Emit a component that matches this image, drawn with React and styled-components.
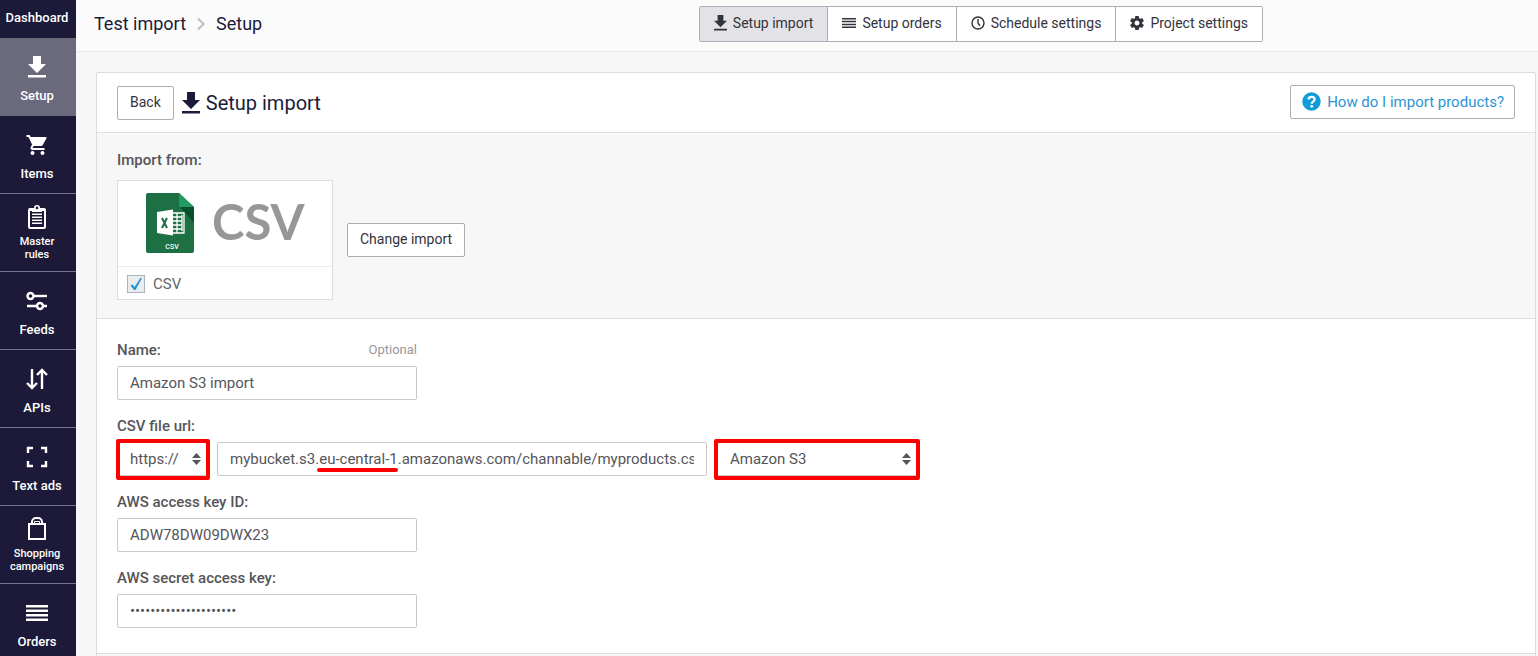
import React, { useId } from 'react';
import styled, { createGlobalStyle, css } from 'styled-components';

const GlobalStyle = createGlobalStyle`
  *, *::before, *::after { box-sizing: border-box; }
  body {
    margin: 0;
    background: #f7f7f7;
    color: #1c1b3a;
    font-family: Roboto, "Liberation Sans", sans-serif;
    font-size: 15px;
    line-height: 20px;
  }
  button, input, select { font: inherit; color: inherit; margin: 0; }
`;

const NAVY = '#1c1a38';

const Shell = styled.div`
  display: flex;
  height: 100vh;
  overflow: hidden;
`;

const Sidebar = styled.nav`
  flex: none;
  display: flex;
  flex-direction: column;
  width: 76px;
  overflow: hidden;
  background: ${NAVY};
`;

const NavIcon = styled.span`
  display: flex;
  align-items: center;
  height: 24px;
  margin-bottom: 8px;
`;

const NavLink = styled.a`
  flex: none;
  display: flex;
  flex-direction: column;
  align-items: center;
  justify-content: flex-end;
  height: ${(p) => (p.$short ? 38 : 78)}px;
  padding: 0 2px 10px 0;
  border-bottom: 1px solid ${(p) => (p.$active || p.$short ? 'transparent' : '#74738a')};
  background: ${(p) => (p.$active ? '#6b6a7c' : NAVY)};
  color: #fff;
  font-size: 13px;
  font-weight: 500;
  line-height: 18px;
  text-align: center;
  text-decoration: none;

  ${(p) => p.$twoLine && css`
    padding: 0 10px 10px 8px;
    font-size: 11px;
    line-height: 13px;
    ${NavIcon} { margin-bottom: 6px; }
  `}
`;

const Main = styled.div`
  flex: 1;
  min-width: 0;
  display: flex;
  flex-direction: column;
`;

const TopBar = styled.header`
  flex: none;
  display: flex;
  align-items: center;
  justify-content: space-between;
  height: 52px;
  padding: 0 275px 4px 18px;
  background: #fbfbfb;
  border-bottom: 1px solid #ebebeb;
`;

const Breadcrumb = styled.div`
  display: flex;
  align-items: center;
  gap: 10px;
  font-size: 18px;
  line-height: 24px;
  white-space: nowrap;

  a { color: inherit; text-decoration: none; }
`;

const Tabs = styled.div`
  display: flex;
  border: 1px solid #acabb6;
  border-radius: 2px;
  background: #fff;
`;

const Tab = styled.button`
  display: flex;
  align-items: center;
  gap: 6px;
  height: 34px;
  padding: 0 14px 2px;
  border: 0;
  background: ${(p) => (p.$active ? '#e3e2e7' : '#fff')};
  color: #33333b;
  font-size: 14px;
  white-space: nowrap;

  & + & { border-left: 1px solid #acabb6; }
`;

const Content = styled.main`
  flex: 1;
  min-height: 0;
  overflow: hidden;
  padding: 20px 2px 0 20px;
`;

const Card = styled.section`
  border: 1px solid #dcdcdc;
  border-radius: 2px;
  background: #fff;
`;

const CardHeader = styled.div`
  display: flex;
  align-items: center;
  justify-content: space-between;
  height: 60px;
  padding: 0 20px;
  border-bottom: 1px solid #dfdfdf;
`;

const CardFooter = styled.div`
  height: 60px;
  background: #f7f7f7;
`;

const TitleGroup = styled.div`
  display: flex;
  align-items: center;
  gap: 8px;
`;

const Title = styled.h1`
  display: flex;
  align-items: center;
  gap: 6px;
  margin: 0;
  font-size: 20px;
  font-weight: 400;
  line-height: 24px;
`;

const Button = styled.button`
  height: 34px;
  padding: 0 12px 2px;
  border: 1px solid #acabb6;
  border-radius: 2px;
  background: #fff;
  color: #33333b;
  font-size: 14px;
`;

const HelpLink = styled.a`
  display: flex;
  align-items: center;
  gap: 6px;
  height: 34px;
  padding: 0 10px 0 11px;
  border: 1px solid #acabb6;
  border-radius: 2px;
  color: #2d94d3;
  text-decoration: none;
`;

const HeaderAction = styled.div`
  padding-bottom: 2px;
`;

const ImportSection = styled.div`
  padding: 17px 20px 18px;
  background: #f7f7f7;
  border-bottom: 1px solid #dfdfdf;
`;

const SectionTitle = styled.div`
  margin-bottom: 10px;
  color: #55555a;
  font-weight: 500;
`;

const ImportRow = styled.div`
  display: flex;
  align-items: center;
  gap: 14px;
`;

const SourceCard = styled.label`
  width: 216px;
  border: 1px solid #dcdcdc;
  background: #fff;
`;

const SourceLogo = styled.span`
  display: flex;
  align-items: flex-start;
  gap: 18px;
  height: 86px;
  padding: 12px 0 0 28px;
  border-bottom: 1px solid #ebebeb;
`;

const Wordmark = styled.span`
  color: #979797;
  font-family: Lato, sans-serif;
  font-size: 49px;
  font-weight: 700;
  line-height: 56px;
`;

const SourceOption = styled.span`
  display: flex;
  align-items: center;
  gap: 8px;
  height: 32px;
  padding: 2px 9px 0;
  color: #66666b;
`;

const Checkbox = styled.input`
  appearance: none;
  width: 18px;
  height: 18px;
  border: 1px solid #a9b5bd;
  background: #ebeced;
`;

const CheckHolder = styled.span`
  position: relative;
  display: flex;

  svg { position: absolute; inset: 0; pointer-events: none; }
`;

const Form = styled.form`
  display: flex;
  flex-direction: column;
  gap: 16px;
  padding: 21px 20px 25px;
  border-bottom: 1px solid #dcdcdc;
  color: #55555a;
`;

const Field = styled.div`
  width: ${(p) => (p.$wide ? 'auto' : '300px')};
`;

const LabelRow = styled.div`
  display: flex;
  justify-content: space-between;
  margin-bottom: 6px;
  font-weight: 500;
`;

const Hint = styled.span`
  color: #97979b;
  font-size: 13px;
  font-weight: 400;
`;

const Input = styled.input`
  display: block;
  width: 100%;
  height: 34px;
  padding: 0 12px;
  border: 1px solid #c9c9cb;
  border-radius: 2px;
  background: #fff;
  outline: 0;
`;

const UrlRow = styled.div`
  display: flex;
  gap: 10px;
`;

const UrlBox = styled.div`
  position: relative;
  width: 490px;

  &::after {
    content: "";
    position: absolute;
    left: 100px;
    bottom: 4px;
    width: 81px;
    height: 4px;
    border-radius: 2px;
    background: #fd0000;
  }
`;

const SelectBox = styled.div`
  position: relative;
  width: ${(p) => p.$width}px;

  &::after {
    content: "";
    position: absolute;
    inset: -3px -3px -4px ${(p) => (p.$first ? -1 : -3)}px;
    border: 4px solid #fd0000;
    border-radius: 2px;
    pointer-events: none;
  }

  svg { position: absolute; right: 6px; top: 11px; pointer-events: none; }
`;

const Select = styled.select`
  appearance: none;
  display: block;
  width: 100%;
  height: 34px;
  padding: 0 12px;
  border: 1px solid #c9c9cb;
  border-radius: 2px;
  background: #fff;
  outline: 0;
`;

const Svg = ({ w = 24, h = w, box = `0 0 ${w} ${h}`, children }) => (
  <svg width={w} height={h} viewBox={box} fill="currentColor" aria-hidden="true">{children}</svg>
);

const DownloadIcon = ({ w = 18, h = 22 }) => (
  <Svg w={w} h={h} box="0 0 18 22"><path d="M5 0h8v8h5l-9 9-9-9h5zM0 19h18v2.5H0z" /></Svg>
);
const CartIcon = () => (
  <Svg w={22} box="1 1 21 22">
    <path d="M7 18c-1.1 0-1.99.9-1.99 2S5.900 22 7 22s2-.9 2-2-.9-2-2-2zM1 2v2h2l3.600 7.590-1.350 2.450c-.16.280-.25.610-.25.960 0 1.100.9 2 2 2h12v-2H7.420c-.14 0-.25-.11-.25-.25l.03-.12.9-1.630h7.450c.75 0 1.410-.41 1.750-1.030l3.580-6.490A1 1 0 0 0 20 4H5.210l-.94-2H1zm16 16c-1.100 0-1.990.9-1.990 2s.89 2 1.990 2 2-.9 2-2-.9-2-2-2z" />
  </Svg>
);
const ClipboardIcon = () => (
  <Svg w={18} h={24}>
    <path fillRule="evenodd" d="M2 3h4a3 3 0 0 1 6 0h4a2 2 0 0 1 2 2v17a2 2 0 0 1-2 2H2a2 2 0 0 1-2-2V5a2 2 0 0 1 2-2zm0 3v16h14V6zM9 1.600a1.300 1.300 0 1 0 0 2.600 1.300 1.300 0 0 0 0-2.600z" />
    <path d="M4 5h10v2H4zM4 8.500h10V10H4zM4 11.500h10V13H4zM4 14.500h10V16H4zM4 17.500h10V19H4z" />
  </Svg>
);
const SlidersIcon = () => (
  <Svg w={22} h={20}>
    <g fill="none" stroke="currentColor" strokeWidth="2.400">
      <circle cx="4.500" cy="5" r="3" /><path d="M7.500 5H21" />
      <circle cx="14" cy="15" r="3" /><path d="M1 15h10M17 15h4" />
    </g>
  </Svg>
);
const ArrowsIcon = () => (
  <Svg w={22} h={22}>
    <path fill="none" stroke="currentColor" strokeWidth="2.400" d="M6 1v18M1 15l5 5 5-5M16 21V3M11 7l5-5 5 5" />
  </Svg>
);
const FrameIcon = () => (
  <Svg w={22} h={22}>
    <path fill="none" stroke="currentColor" strokeWidth="2.400" d="M2 7V2h5M15 2h5v5M20 15v5h-5M7 20H2v-5" />
  </Svg>
);
const BagIcon = () => (
  <Svg w={20} h={24}>
    <path fill="none" stroke="currentColor" strokeWidth="2" d="M2 7h16v15H2zM5 7V5a4 4 0 0 1 4-4h2a4 4 0 0 1 4 4v2" />
    <path fill="none" stroke="currentColor" d="M7.500 6V4.500h5V6" />
  </Svg>
);
const LinesIcon = ({ w = 22, h = 16 }) => (
  <Svg w={w} h={h} box="0 0 22 16"><path d="M0 0h22v2.500H0zM0 4.500h22V7H0zM0 9h22v2.500H0zM0 13.500h22V16H0z" /></Svg>
);
const ClockIcon = () => (
  <Svg w={14}><g fill="none" stroke="currentColor" strokeWidth="1.400"><circle cx="7" cy="7" r="6" /><path d="M7 3v4.200l2 2.500" /></g></Svg>
);
const GearIcon = () => (
  <Svg w={14} box="2 2 20 20">
    <path d="M19.430 12.980c.04-.32.070-.64.070-.98s-.03-.66-.07-.98l2.110-1.650c.19-.15.24-.42.120-.64l-2-3.460c-.12-.22-.39-.3-.61-.22l-2.490 1c-.52-.4-1.080-.73-1.690-.98l-.38-2.650A.488.488 0 0 0 14 2h-4c-.25 0-.46.180-.49.420l-.38 2.650c-.61.250-1.170.590-1.690.980l-2.490-1c-.23-.09-.49 0-.61.220l-2 3.460c-.13.220-.07.490.120.640l2.110 1.650c-.04.320-.07.650-.07.980s.03.660.070.980l-2.110 1.650c-.19.150-.24.420-.12.640l2 3.460c.12.220.39.300.61.220l2.490-1c.52.400 1.080.730 1.690.980l.38 2.650c.03.240.24.420.49.420h4c.25 0 .46-.18.490-.42l.38-2.650c.61-.25 1.170-.59 1.690-.98l2.490 1c.23.090.49 0 .61-.22l2-3.460c.12-.22.070-.49-.12-.64l-2.110-1.650zM12 15.500c-1.930 0-3.500-1.570-3.500-3.500s1.570-3.500 3.500-3.500 3.500 1.570 3.500 3.500-1.570 3.500-3.500 3.500z" />
  </Svg>
);
const ChevronIcon = () => (
  <Svg w={10} h={14}><path fill="none" stroke="#c4c4c8" strokeWidth="2.400" d="M2 1.500L7.500 7 2 12.500" /></Svg>
);
const HelpIcon = () => (
  <Svg w={19}>
    <circle cx="9.500" cy="9.500" r="9.200" fill="#129bdb" />
    <path fill="none" stroke="#fff" strokeWidth="2.200" d="M6.500 7.500c0-3.600 6.200-3.400 6.200-.2 0 2-2.900 2-2.900 4.500" />
    <circle cx="9.700" cy="14.300" r="1.400" fill="#fff" />
  </Svg>
);
const SortIcon = () => (
  <Svg w={9} h={12}><path d="M4.500 0L9 5H0zM0 7h9l-4.500 5z" /></Svg>
);
const CheckIcon = () => (
  <Svg w={18}><path fill="#1e94d8" d="M3.500 10.500l2-1 2 2.500L13.500 3H15L8.500 15H7z" /></Svg>
);
const SheetIcon = () => (
  <Svg w={48} h={60}>
    <path fill="#1d7044" d="M2 0h31l15 14v44a2 2 0 0 1-2 2H2a2 2 0 0 1-2-2V2a2 2 0 0 1 2-2z" />
    <path fill="#239a5e" d="M33 0l15 14H33z" />
    <path fill="#06502b" d="M34 14h14v16z" />
    <path fill="none" stroke="#fff" strokeWidth="1.300" d="M26 20h12v20H26M26 24h10M26 28h10M26 32h10M26 36h10M31 20v20M36 22v16" />
    <path fill="#fff" d="M11 19l16-2.500v26L11 40z" />
    <path fill="none" stroke="#1d7044" strokeWidth="2" d="M16 25l5 10M21 25l-5 10" />
    <text x="26" y="56" fill="#fff" fontSize="7" fontWeight="500" textAnchor="middle">CSV</text>
  </Svg>
);

const NAV = [
  { label: 'Dashboard', short: true },
  { label: 'Setup', icon: <DownloadIcon />, active: true },
  { label: 'Items', icon: <CartIcon /> },
  { label: 'Master rules', icon: <ClipboardIcon />, twoLine: true },
  { label: 'Feeds', icon: <SlidersIcon /> },
  { label: 'APIs', icon: <ArrowsIcon /> },
  { label: 'Text ads', icon: <FrameIcon /> },
  { label: 'Shopping campaigns', icon: <BagIcon />, twoLine: true },
  { label: 'Orders', icon: <LinesIcon /> },
];

const TABS = [
  { label: 'Setup import', icon: <DownloadIcon w={13} h={16} />, active: true },
  { label: 'Setup orders', icon: <LinesIcon w={14} h={12} /> },
  { label: 'Schedule settings', icon: <ClockIcon /> },
  { label: 'Project settings', icon: <GearIcon /> },
];

function TextField({ label, hint, ...rest }) {
  const id = useId();
  return (
    <Field>
      <LabelRow>
        <label htmlFor={id}>{label}</label>
        {hint && <Hint>{hint}</Hint>}
      </LabelRow>
      <Input id={id} {...rest} />
    </Field>
  );
}

export default function App() {
  return (
    <>
      <GlobalStyle />
      <Shell>
        <Sidebar aria-label="Main">
          {NAV.map(({ label, icon, active, short, twoLine }) => (
            <NavLink key={label} href="#" $active={active} $short={short} $twoLine={twoLine}>
              {icon && <NavIcon>{icon}</NavIcon>}
              {label}
            </NavLink>
          ))}
        </Sidebar>
        <Main>
          <TopBar>
            <Breadcrumb>
              <a href="#">Test import</a>
              <ChevronIcon />
              <span>Setup</span>
            </Breadcrumb>
            <Tabs>
              {TABS.map(({ label, icon, active }) => (
                <Tab key={label} type="button" $active={active}>{icon}{label}</Tab>
              ))}
            </Tabs>
          </TopBar>
          <Content>
            <Card>
              <CardHeader>
                <TitleGroup>
                  <Button type="button">Back</Button>
                  <Title><DownloadIcon />Setup import</Title>
                </TitleGroup>
                <HeaderAction>
                  <HelpLink href="#"><HelpIcon />How do I import products?</HelpLink>
                </HeaderAction>
              </CardHeader>
              <ImportSection>
                <SectionTitle>Import from:</SectionTitle>
                <ImportRow>
                  <SourceCard>
                    <SourceLogo><SheetIcon /><Wordmark>CSV</Wordmark></SourceLogo>
                    <SourceOption>
                      <CheckHolder><Checkbox type="checkbox" defaultChecked /><CheckIcon /></CheckHolder>
                      CSV
                    </SourceOption>
                  </SourceCard>
                  <Button type="button">Change import</Button>
                </ImportRow>
              </ImportSection>
              <Form>
                <TextField label="Name:" hint="Optional" defaultValue="Amazon S3 import" />
                <Field $wide>
                  <LabelRow><label htmlFor="csv-url">CSV file url:</label></LabelRow>
                  <UrlRow>
                    <SelectBox $width={90} $first>
                      <Select aria-label="Protocol"><option>https://</option></Select>
                      <SortIcon />
                    </SelectBox>
                    <UrlBox>
                      <Input id="csv-url" defaultValue="mybucket.s3.eu-central-1.amazonaws.com/channable/myproducts.csv" />
                    </UrlBox>
                    <SelectBox $width={200}>
                      <Select aria-label="Storage"><option>Amazon S3</option></Select>
                      <SortIcon />
                    </SelectBox>
                  </UrlRow>
                </Field>
                <TextField label="AWS access key ID:" defaultValue="ADW78DW09DWX23" />
                <TextField label="AWS secret access key:" type="password" defaultValue="aaaaaaaaaaaaaaaaaaaaa" />
              </Form>
              <CardFooter />
            </Card>
          </Content>
        </Main>
      </Shell>
    </>
  );
}
